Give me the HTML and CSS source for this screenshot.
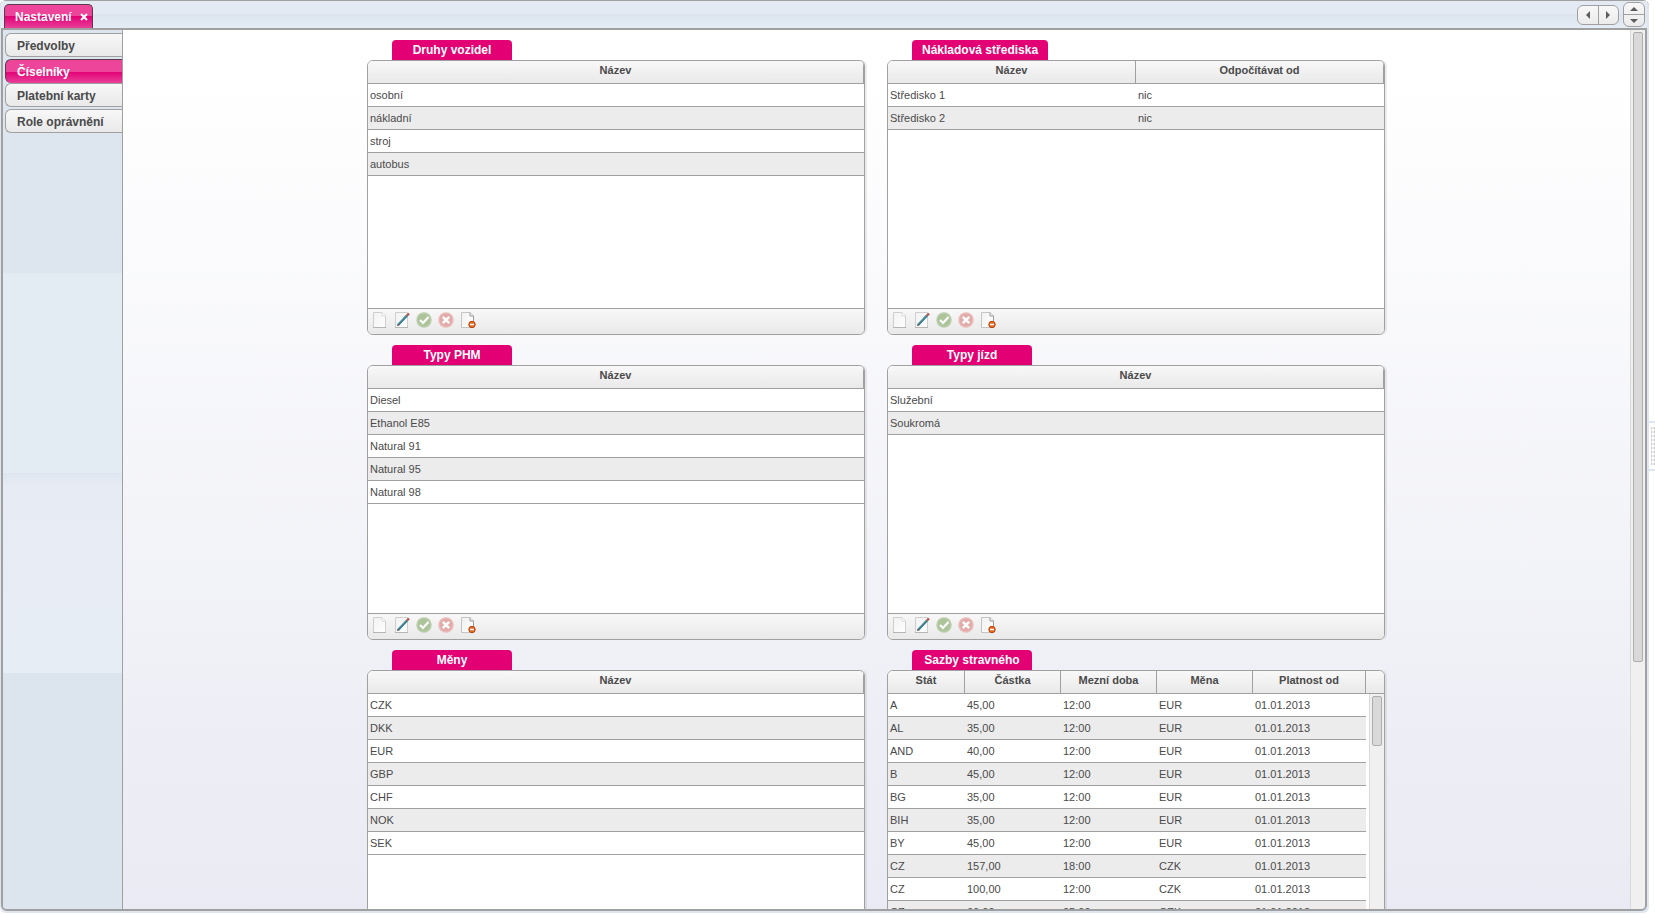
FILE: index.html
```
<!DOCTYPE html>
<html lang="cs">
<head>
    <meta charset="UTF-8">
    <meta name="viewport" content="width=device-width, initial-scale=1.0">
    <title>Nastavení</title>
    <link rel="stylesheet" href="styles.css">
</head>
<body>
    <!-- toolbar icons -->
    <svg class="sprite" aria-hidden="true">
        <defs>
            <linearGradient id="paper" x1="0" y1="0" x2="1" y2="1">
                <stop offset="0" stop-color="#f1f1f1"/>
                <stop offset="1" stop-color="#ffffff"/>
            </linearGradient>
        </defs>
        <symbol id="icon-new" viewBox="0 0 16 16">
            <path d="M1.5 0.5H10L13.5 4V15.5H1.5Z" fill="url(#paper)" stroke="#cfcfcf"/>
            <path d="M1 15.5H14" stroke="#b5b5b5"/>
            <path d="M10 0.5V4H13.5" fill="#fff" stroke="#d8d8d8"/>
        </symbol>
        <symbol id="icon-edit" viewBox="0 0 16 16">
            <path d="M1.5 0.5H13.5V15.5H1.5Z" fill="url(#paper)" stroke="#cfcfcf"/>
            <path d="M1 15.5H14" stroke="#b5b5b5"/>
            <path d="M4.5 12.5L13 3.5" stroke="#2f7482" stroke-width="2.4"/>
            <path d="M4.5 12L12.5 3.5" stroke="#5fa3b0" stroke-width="0.8"/>
            <path d="M13 3.5L15 1.5" stroke="#b9524a" stroke-width="2.4"/>
            <path d="M3 14L3.7 11.4L5.6 13.2Z" fill="#444"/>
        </symbol>
        <symbol id="icon-save" viewBox="0 0 16 16">
            <circle cx="8" cy="8" r="7.7" fill="#b9cdaa"/>
            <circle cx="8" cy="8" r="6.2" fill="#adc49b"/>
            <path d="M4 8L7 11L12.500 5" fill="none" stroke="#fff" stroke-width="2.2"/>
        </symbol>
        <symbol id="icon-cancel" viewBox="0 0 16 16">
            <circle cx="8" cy="8" r="7.7" fill="#e8bab8"/>
            <circle cx="8" cy="8" r="6.2" fill="#e2aaa8"/>
            <path d="M4.8 4.8L11.2 11.2M11.2 4.8L4.8 11.2" fill="none" stroke="#fff" stroke-width="2.4"/>
        </symbol>
        <symbol id="icon-delete" viewBox="0 0 16 16">
            <path d="M1.5 0.5H10L13.5 4V15.5H1.5Z" fill="url(#paper)" stroke="#c4c4c4"/>
            <path d="M10 0.5V4H13.5V9" fill="#fff" stroke="#999"/>
            <circle cx="12" cy="12.5" r="3.2" fill="#ea6a1c" stroke="#b8400c"/>
            <path d="M10 12.5H14" stroke="#fff" stroke-width="1.4"/>
        </symbol>
        <symbol id="arrow-left" viewBox="0 0 8 8"><path d="M6 0V8L2 4Z"/></symbol>
        <symbol id="arrow-right" viewBox="0 0 8 8"><path d="M2 0V8L6 4Z"/></symbol>
        <symbol id="arrow-up" viewBox="0 0 8 8"><path d="M0 6H8L4 2Z"/></symbol>
        <symbol id="arrow-down" viewBox="0 0 8 8"><path d="M0 2H8L4 6Z"/></symbol>
    </svg>

    <div class="frame">
        <header class="topbar">
            <div class="main-tab">
                <a href="#">Nastavení</a>
                <button class="close-btn" aria-label="Zavřít">
                    <svg viewBox="0 0 8 8"><path d="M1 1L7 7M7 1L1 7"/></svg>
                </button>
            </div>
            <div class="pager">
                <button aria-label="Předchozí"><svg><use href="#arrow-left"/></svg></button>
                <button aria-label="Další"><svg><use href="#arrow-right"/></svg></button>
            </div>
            <div class="pager vertical">
                <button aria-label="Nahoru"><svg><use href="#arrow-up"/></svg></button>
                <button aria-label="Dolů"><svg><use href="#arrow-down"/></svg></button>
            </div>
        </header>

        <div class="workspace">
            <nav class="sidebar">
                <a href="#">Předvolby</a>
                <a href="#" class="active">Číselníky</a>
                <a href="#">Platební karty</a>
                <a href="#">Role oprávnění</a>
            </nav>

            <main class="content">
                <section class="panel">
                    <h2>Druhy vozidel</h2>
                    <div class="box">
                        <div class="grid">
                            <table>
                                <thead><tr><th>Název</th></tr></thead>
                                <tbody>
                                    <tr><td>osobní</td></tr>
                                    <tr><td>nákladní</td></tr>
                                    <tr><td>stroj</td></tr>
                                    <tr><td>autobus</td></tr>
                                </tbody>
                            </table>
                        </div>
                        <div class="toolbar">
                            <button aria-label="Nový"><svg><use href="#icon-new"/></svg></button>
                            <button aria-label="Upravit"><svg><use href="#icon-edit"/></svg></button>
                            <button aria-label="Uložit" disabled><svg><use href="#icon-save"/></svg></button>
                            <button aria-label="Zrušit" disabled><svg><use href="#icon-cancel"/></svg></button>
                            <button aria-label="Smazat"><svg><use href="#icon-delete"/></svg></button>
                        </div>
                    </div>
                </section>

                <section class="panel">
                    <h2>Nákladová střediska</h2>
                    <div class="box">
                        <div class="grid">
                            <table>
                                <thead><tr><th>Název</th><th>Odpočítávat od</th></tr></thead>
                                <tbody>
                                    <tr><td>Středisko 1</td><td>nic</td></tr>
                                    <tr><td>Středisko 2</td><td>nic</td></tr>
                                </tbody>
                            </table>
                        </div>
                        <div class="toolbar">
                            <button aria-label="Nový"><svg><use href="#icon-new"/></svg></button>
                            <button aria-label="Upravit"><svg><use href="#icon-edit"/></svg></button>
                            <button aria-label="Uložit" disabled><svg><use href="#icon-save"/></svg></button>
                            <button aria-label="Zrušit" disabled><svg><use href="#icon-cancel"/></svg></button>
                            <button aria-label="Smazat"><svg><use href="#icon-delete"/></svg></button>
                        </div>
                    </div>
                </section>

                <section class="panel">
                    <h2>Typy PHM</h2>
                    <div class="box">
                        <div class="grid">
                            <table>
                                <thead><tr><th>Název</th></tr></thead>
                                <tbody>
                                    <tr><td>Diesel</td></tr>
                                    <tr><td>Ethanol E85</td></tr>
                                    <tr><td>Natural 91</td></tr>
                                    <tr><td>Natural 95</td></tr>
                                    <tr><td>Natural 98</td></tr>
                                </tbody>
                            </table>
                        </div>
                        <div class="toolbar">
                            <button aria-label="Nový"><svg><use href="#icon-new"/></svg></button>
                            <button aria-label="Upravit"><svg><use href="#icon-edit"/></svg></button>
                            <button aria-label="Uložit" disabled><svg><use href="#icon-save"/></svg></button>
                            <button aria-label="Zrušit" disabled><svg><use href="#icon-cancel"/></svg></button>
                            <button aria-label="Smazat"><svg><use href="#icon-delete"/></svg></button>
                        </div>
                    </div>
                </section>

                <section class="panel">
                    <h2>Typy jízd</h2>
                    <div class="box">
                        <div class="grid">
                            <table>
                                <thead><tr><th>Název</th></tr></thead>
                                <tbody>
                                    <tr><td>Služební</td></tr>
                                    <tr><td>Soukromá</td></tr>
                                </tbody>
                            </table>
                        </div>
                        <div class="toolbar">
                            <button aria-label="Nový"><svg><use href="#icon-new"/></svg></button>
                            <button aria-label="Upravit"><svg><use href="#icon-edit"/></svg></button>
                            <button aria-label="Uložit" disabled><svg><use href="#icon-save"/></svg></button>
                            <button aria-label="Zrušit" disabled><svg><use href="#icon-cancel"/></svg></button>
                            <button aria-label="Smazat"><svg><use href="#icon-delete"/></svg></button>
                        </div>
                    </div>
                </section>

                <section class="panel">
                    <h2>Měny</h2>
                    <div class="box">
                        <div class="grid">
                            <table>
                                <thead><tr><th>Název</th></tr></thead>
                                <tbody>
                                    <tr><td>CZK</td></tr>
                                    <tr><td>DKK</td></tr>
                                    <tr><td>EUR</td></tr>
                                    <tr><td>GBP</td></tr>
                                    <tr><td>CHF</td></tr>
                                    <tr><td>NOK</td></tr>
                                    <tr><td>SEK</td></tr>
                                </tbody>
                            </table>
                        </div>
                    </div>
                </section>

                <section class="panel">
                    <h2>Sazby stravného</h2>
                    <div class="box">
                        <div class="grid">
                            <table class="rates">
                                <colgroup>
                                    <col class="col-state">
                                    <col class="col-value">
                                    <col class="col-value">
                                    <col class="col-value">
                                    <col>
                                    <col class="col-scroll">
                                </colgroup>
                                <thead><tr><th>Stát</th><th>Částka</th><th>Mezní doba</th><th>Měna</th><th>Platnost od</th><th></th></tr></thead>
                                <tbody>
                                    <tr><td>A</td><td>45,00</td><td>12:00</td><td>EUR</td><td>01.01.2013</td></tr>
                                    <tr><td>AL</td><td>35,00</td><td>12:00</td><td>EUR</td><td>01.01.2013</td></tr>
                                    <tr><td>AND</td><td>40,00</td><td>12:00</td><td>EUR</td><td>01.01.2013</td></tr>
                                    <tr><td>B</td><td>45,00</td><td>12:00</td><td>EUR</td><td>01.01.2013</td></tr>
                                    <tr><td>BG</td><td>35,00</td><td>12:00</td><td>EUR</td><td>01.01.2013</td></tr>
                                    <tr><td>BIH</td><td>35,00</td><td>12:00</td><td>EUR</td><td>01.01.2013</td></tr>
                                    <tr><td>BY</td><td>45,00</td><td>12:00</td><td>EUR</td><td>01.01.2013</td></tr>
                                    <tr><td>CZ</td><td>157,00</td><td>18:00</td><td>CZK</td><td>01.01.2013</td></tr>
                                    <tr><td>CZ</td><td>100,00</td><td>12:00</td><td>CZK</td><td>01.01.2013</td></tr>
                                    <tr><td>CZ</td><td>66,00</td><td>05:00</td><td>CZK</td><td>01.01.2013</td></tr>
                                </tbody>
                            </table>
                            <div class="scrollbar grid-scroll"><div class="thumb"></div></div>
                        </div>
                    </div>
                </section>
            </main>

            <div class="scrollbar page-scroll"><div class="thumb"></div></div>
        </div>
    </div>
    <div class="splitter"></div>
</body>
</html>
```
FILE: styles.css
```
* {
    margin: 0;
    padding: 0;
    box-sizing: border-box;
}

body {
    height: 100vh;
    padding: 0 6px 2px 0;
    overflow: hidden;
    background: #fff;
    color: #4a4a4a;
    font-family: "Liberation Sans", Arial, sans-serif;
    font-size: 11px;
}

a {
    color: inherit;
    text-decoration: none;
}

button {
    border: none;
    background: none;
    cursor: pointer;
}

.sprite {
    position: absolute;
    width: 0;
    height: 0;
}

.frame {
    height: 100%;
    display: flex;
    flex-direction: column;
    padding: 0 2px 2px 1px;
    background: #dfe6ef;
    border-top: 1px solid #a0a0a0;
    border-radius: 6px;
}

/* Top bar */
.topbar {
    flex: none;
    height: 27px;
    display: flex;
    align-items: center;
    gap: 4px;
    padding: 0 2px 0 3px;
    background: linear-gradient(to bottom, #e4eaf3 50%, #dce5ed 50%, #e4edf5);
}

.main-tab {
    align-self: flex-end;
    height: 24px;
    margin-right: auto;
    display: flex;
    align-items: center;
    gap: 8px;
    padding: 0 4px 0 10px;
    border: 1px solid #5a3a4c;
    border-bottom: none;
    border-radius: 5px 5px 0 0;
    background: linear-gradient(to bottom, #ec4599 50%, #e20074 50%, #e9409a);
    color: #fff;
    font-size: 12px;
    font-weight: bold;
}

.close-btn {
    width: 8px;
    height: 8px;
    display: flex;
}

.close-btn svg {
    width: 8px;
    height: 8px;
    stroke: #fff;
    stroke-width: 2;
}

.pager {
    display: flex;
    width: 42px;
    height: 20px;
    border: 1px solid #a0a0a0;
    border-radius: 6px;
    background: linear-gradient(to bottom, #f8f8f8, #ebebeb);
}

.pager button {
    flex: 1;
    display: flex;
    align-items: center;
    justify-content: center;
}

.pager button + button {
    border-left: 1px solid #a0a0a0;
}

.pager svg {
    width: 8px;
    height: 8px;
    fill: #5c5c5c;
}

.pager.vertical {
    flex-direction: column;
    width: 22px;
    height: 25px;
}

.pager.vertical button + button {
    border-left: none;
    border-top: 1px solid #a0a0a0;
}

/* Workspace */
.workspace {
    flex: 1;
    min-height: 0;
    display: flex;
    border: 2px solid #a0a0a0;
    border-radius: 0 0 6px 6px;
    overflow: hidden;
}

.sidebar {
    flex: none;
    width: 120px;
    display: flex;
    flex-direction: column;
    gap: 2px;
    padding: 3px 0 0 2px;
    border-right: 1px solid #a0a0a0;
    background: linear-gradient(to bottom,
        #dde5ee 243px, #e3ebf3 243px, #e3ebf3 443px,
        #dde6ef 443px, #e7ecf4 456px, #e7edf4 643px, #dce5ed 643px);
}

.sidebar a {
    height: 24px;
    padding-left: 11px;
    border: 1px solid #a0a0a0;
    border-right: none;
    border-radius: 6px 0 0 6px;
    background: linear-gradient(to bottom, #f7f7f7, #e9e9e9);
    font-size: 12px;
    font-weight: bold;
    line-height: 24px;
}

.sidebar a.active {
    margin-bottom: -2px;
    border-color: #5a3a4c;
    border-bottom: none;
    background: linear-gradient(to bottom, #ec4599 50%, #e20074 50%, #e9409a);
    color: #fff;
}

.content {
    flex: 1;
    min-width: 0;
    display: grid;
    grid-template-columns: repeat(2, minmax(0, 498px));
    justify-content: center;
    align-content: start;
    gap: 10px 22px;
    padding: 10px 1px 0 0;
    background: linear-gradient(to bottom, #fff 5%, #e9eaf3);
    overflow: hidden;
}

/* Panels */
.panel {
    display: flex;
    flex-direction: column;
    align-items: flex-start;
}

.panel h2 {
    min-width: 120px;
    height: 20px;
    margin-left: 25px;
    padding: 0 10px;
    border-radius: 4px 4px 0 0;
    background: #e20074;
    color: #fff;
    font-size: 12px;
    line-height: 20px;
    text-align: center;
}

.box {
    width: 100%;
    border: 1px solid #a0a0a0;
    border-radius: 6px;
    background: #fff;
    box-shadow: 2px 0 0 rgba(0, 0, 0, 0.07);
    overflow: hidden;
}

.grid {
    position: relative;
    height: 247px;
}

table {
    width: 100%;
    table-layout: fixed;
    border-spacing: 0;
}

th {
    height: 23px;
    padding-bottom: 4px;
    border-right: 1px solid #a0a0a0;
    border-bottom: 1px solid #a0a0a0;
    background: linear-gradient(to bottom, #f8f8f8, #e9e9e9);
}

td {
    height: 23px;
    padding: 0 2px;
    border-bottom: 1px solid #a0a0a0;
}

tbody tr:nth-child(even) td {
    background: #ececec;
}

.rates .col-state {
    width: 77px;
}

.rates .col-value {
    width: 96px;
}

.rates .col-scroll {
    width: 18px;
}

.rates th:last-child {
    border-right: none;
}

.toolbar {
    height: 26px;
    display: flex;
    gap: 6px;
    padding: 3px 4px;
    border-top: 1px solid #a0a0a0;
    background: linear-gradient(to bottom, #f8f8f8, #e9e9e9);
}

.toolbar button,
.toolbar svg {
    display: block;
    width: 16px;
    height: 16px;
}

/* Scrollbars */
.scrollbar {
    width: 15px;
    padding: 2px;
    border-left: 1px solid #d9d9d9;
    background: #f0f0f0;
}

.thumb {
    border: 1px solid #adadad;
    border-radius: 2px;
    background: #d9d9d9;
}

.page-scroll {
    flex: none;
}

.page-scroll .thumb {
    width: 10px;
    height: 72%;
}

.grid-scroll {
    position: absolute;
    top: 23px;
    right: 0;
    bottom: 0;
}

.grid-scroll .thumb {
    width: 10px;
    height: 50px;
}

.splitter {
    position: absolute;
    top: 46%;
    right: 0;
    width: 6px;
    height: 50px;
    border-top: 2px solid #dfe6ef;
    border-bottom: 2px solid #dfe6ef;
    background: radial-gradient(circle, #cfcfcf 1px, transparent 2px) 2px 3px / 4px 4px content-box;
    padding: 4px 0 4px 2px;
}
```
